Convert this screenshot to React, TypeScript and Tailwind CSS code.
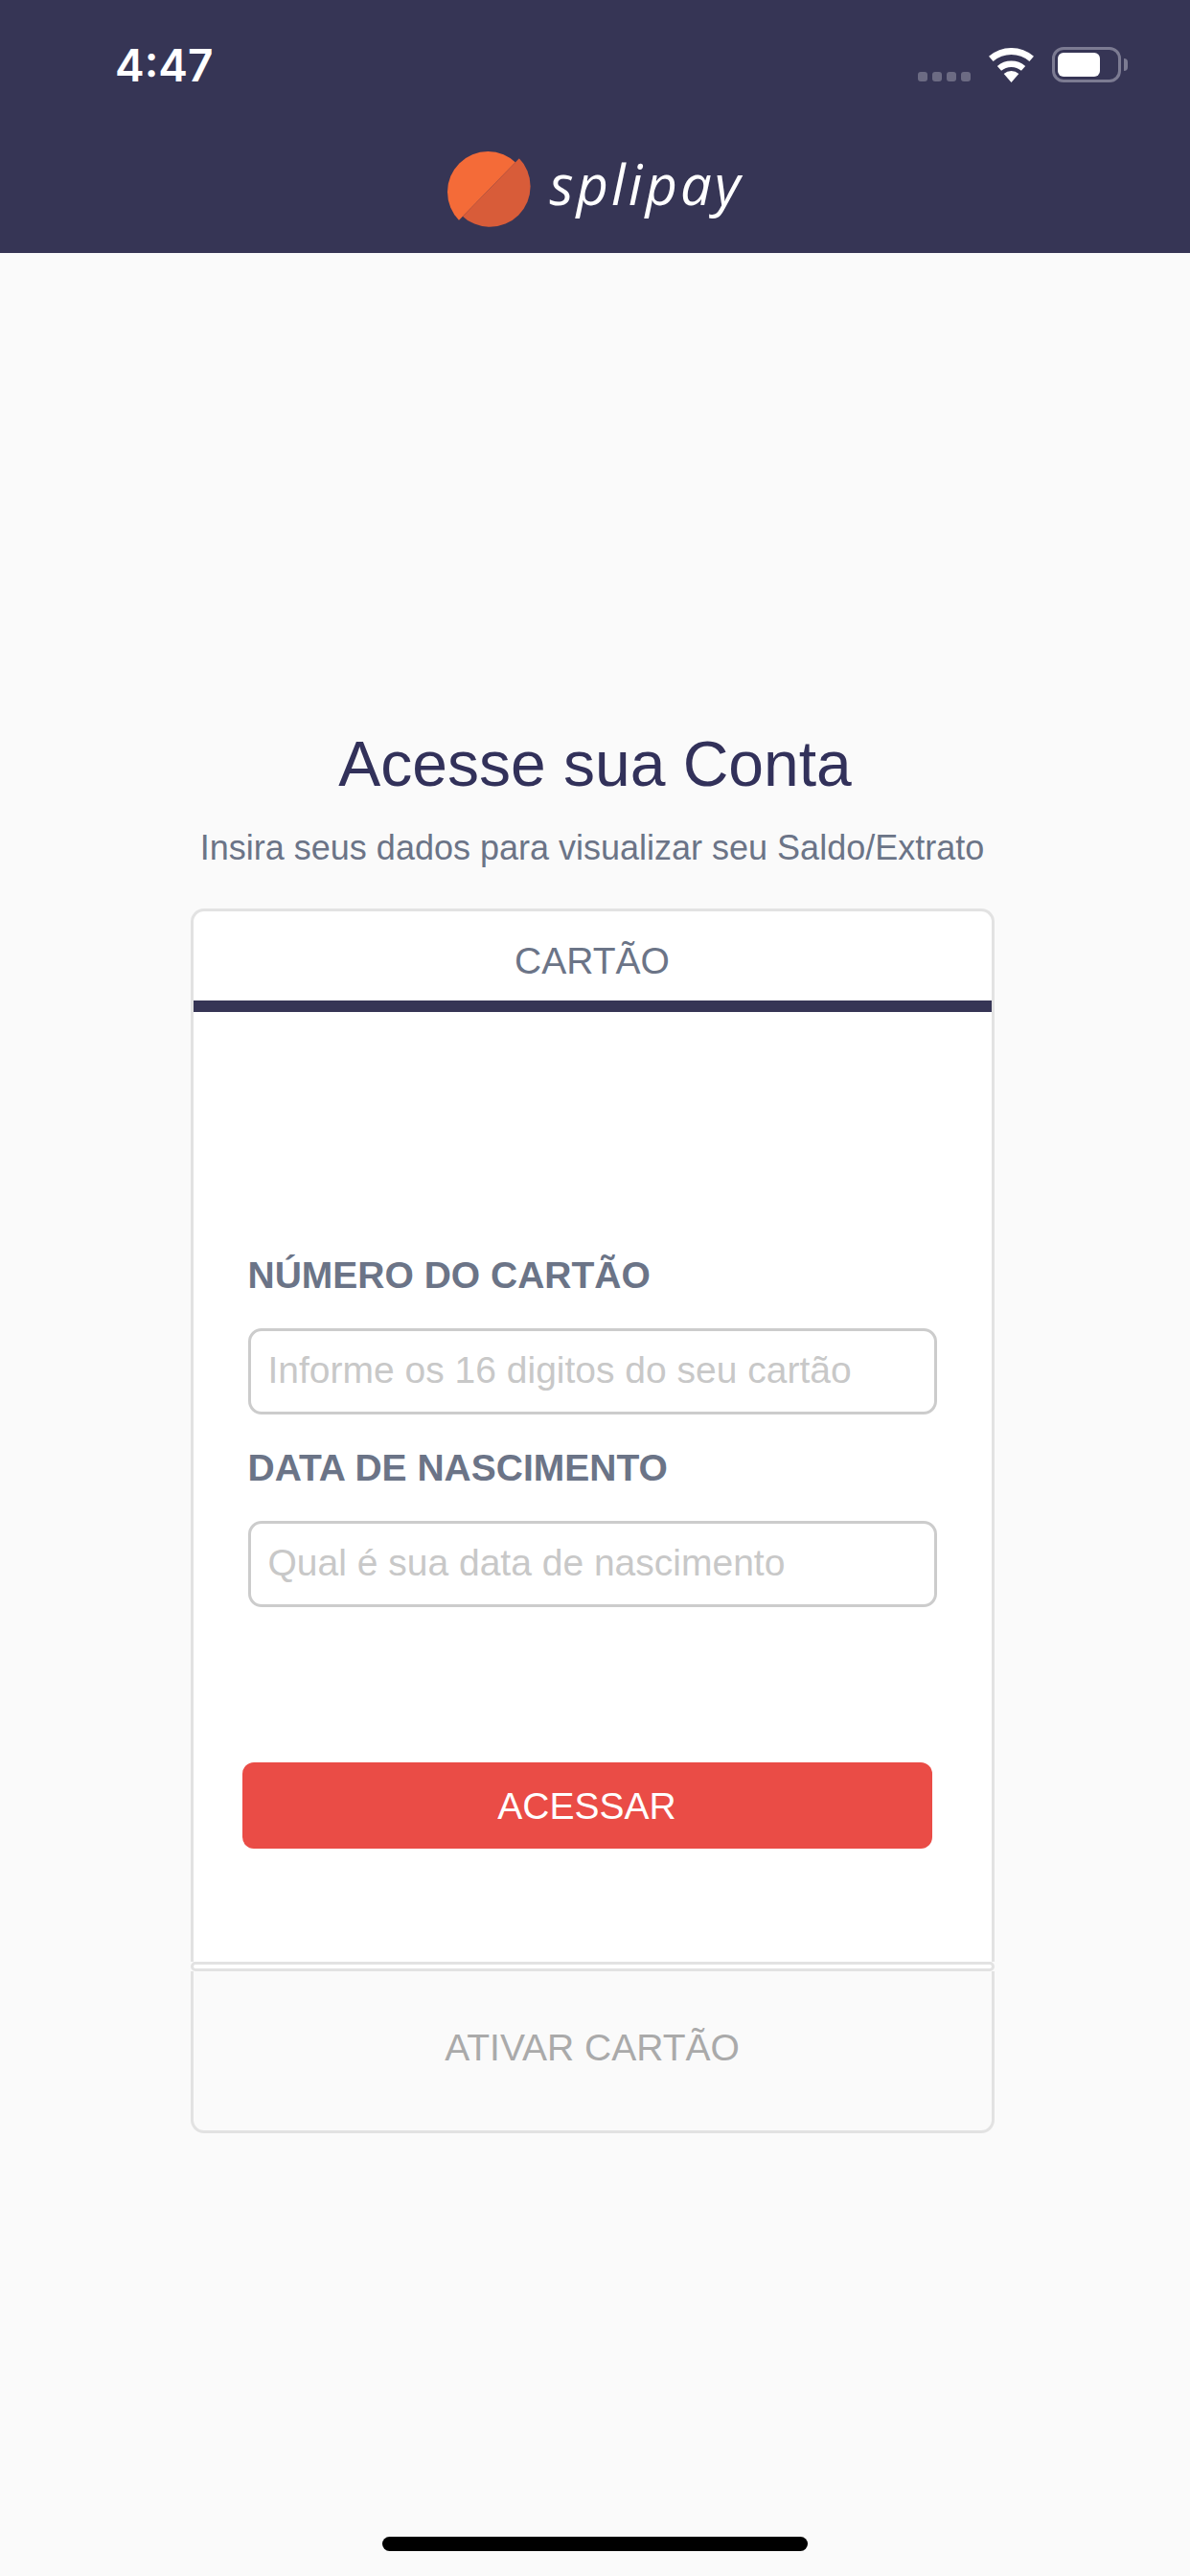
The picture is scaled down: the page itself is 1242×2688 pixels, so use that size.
function SplipayMark() {
  return (
    <svg width="87" height="79" viewBox="0 0 87 79">
      <defs>
        <clipPath id="markLight">
          <polygon points="0,0 82,0 4,80 0,80" />
        </clipPath>
        <clipPath id="markDark">
          <polygon points="82,0 90,0 90,80 4,80" />
        </clipPath>
      </defs>
      <circle cx="42.3" cy="42.3" r="42.3" fill="#f46b38" clipPath="url(#markLight)" />
      <circle cx="44.3" cy="36.5" r="42.3" fill="#d85c39" clipPath="url(#markDark)" />
    </svg>
  );
}

function WifiIcon() {
  return (
    <svg width="47" height="36" viewBox="0 0 47 36" fill="#fff">
      <path d="M0.03 8.7A36 36 0 0 1 46.97 8.7L42.4 14A29 29 0 0 0 4.6 14Z" />
      <path d="M8.83 18.95A22.5 22.5 0 0 1 38.17 18.95L33.93 23.87A16 16 0 0 0 13.07 23.87Z" />
      <path d="M15.68 26.9A12 12 0 0 1 31.32 26.9L23.5 36Z" />
    </svg>
  );
}

function StatusBar() {
  return (
    <div className="flex items-start justify-between pl-[120px] pr-[65px] pt-[41px]">
      <span className="font-['Inter',sans-serif] text-[46px] leading-[54px] font-semibold text-white">4:47</span>
      <div className="flex items-end pt-[8px]">
        <div className="mb-[1px] flex gap-[5px]">
          <span className="h-[10px] w-[10px] rounded-[3px] bg-[#6c6b83]" />
          <span className="h-[10px] w-[10px] rounded-[3px] bg-[#6c6b83]" />
          <span className="h-[10px] w-[10px] rounded-[3px] bg-[#6c6b83]" />
          <span className="h-[10px] w-[10px] rounded-[3px] bg-[#6c6b83]" />
        </div>
        <div className="ml-[19px]">
          <WifiIcon />
        </div>
        <div className="ml-[19px] flex items-center">
          <div className="flex h-[37px] w-[72px] items-center rounded-[12px] border-[3px] border-[#7c7b92] pl-[3px]">
            <div className="h-[25px] w-[44px] rounded-[6px] bg-white" />
          </div>
          <div className="ml-[3px] h-[13px] w-[4px] rounded-r-[4px] bg-[#7c7b92]" />
        </div>
      </div>
    </div>
  );
}

function Field({ label, placeholder, className }: { label: string; placeholder: string; className?: string }) {
  return (
    <div className={className}>
      <label className="block text-[39px] leading-[46px] font-bold text-[#6b7487]">{label}</label>
      <input
        placeholder={placeholder}
        className="mt-[32px] block h-[90px] w-full rounded-[14px] border-[3px] border-[#cccccc] bg-white pb-[2px] pl-[18px] text-[39px] outline-none placeholder:text-[#c8c8c8]"
      />
    </div>
  );
}

export default function App() {
  return (
    <div className="flex min-h-screen flex-col bg-[#fafafa] font-['Liberation_Sans',Arial,sans-serif]">
      <header className="h-[264px] bg-[#363555]">
        <StatusBar />
        <div className="mt-[63px] flex items-start justify-center">
          <SplipayMark />
          <span className="-mt-[1px] ml-[20px] font-['Open_Sans',sans-serif] text-[58px] leading-[70px] font-medium tracking-[3px] text-white italic">
            splipay
          </span>
        </div>
      </header>

      <main className="flex flex-col items-center">
        <h1 className="mt-[493px] text-[66px] leading-[80px] font-normal text-[#32315a]">Acesse sua Conta</h1>
        <p className="mt-[26px] pr-[6px] text-[36px] leading-[44px] text-[#6b7487]">
          Insira seus dados para visualizar seu Saldo/Extrato
        </p>

        <section className="mt-[41px] mr-[6px] w-[839px]">
          <div className="rounded-t-[14px] border-x-[3px] border-t-[3px] border-[#e2e2e2] bg-white">
            <div className="pt-[30px] pb-[19px] text-center text-[39px] leading-[44px] text-[#6b7487]">CARTÃO</div>
            <div className="h-[12px] bg-[#363555]" />
            <div className="flex flex-col pt-[252px] pr-[57px] pb-[118px] pl-[57px]">
              <Field label="NÚMERO DO CARTÃO" placeholder="Informe os 16 digitos do seu cartão" />
              <Field className="mt-[33px]" label="DATA DE NASCIMENTO" placeholder="Qual é sua data de nascimento" />
              <button className="mt-[162px] -ml-[6px] h-[90px] w-[720px] rounded-[12px] bg-[#ea4c46] pt-[2px] text-[39px] text-white">
                ACESSAR
              </button>
            </div>
          </div>
          <div className="h-[10px] rounded-full border-[3px] border-[#e2e2e2] bg-white" />
          <div className="h-[169px] rounded-b-[14px] border-x-[3px] border-b-[3px] border-[#e2e2e2] pt-[58px] text-center text-[39px] leading-[44px] text-[#aaaaaa]">
            ATIVAR CARTÃO
          </div>
        </section>
      </main>

      <div className="mt-auto flex justify-center pb-[26px]">
        <div className="h-[15px] w-[444px] rounded-full bg-black" />
      </div>
    </div>
  );
}
